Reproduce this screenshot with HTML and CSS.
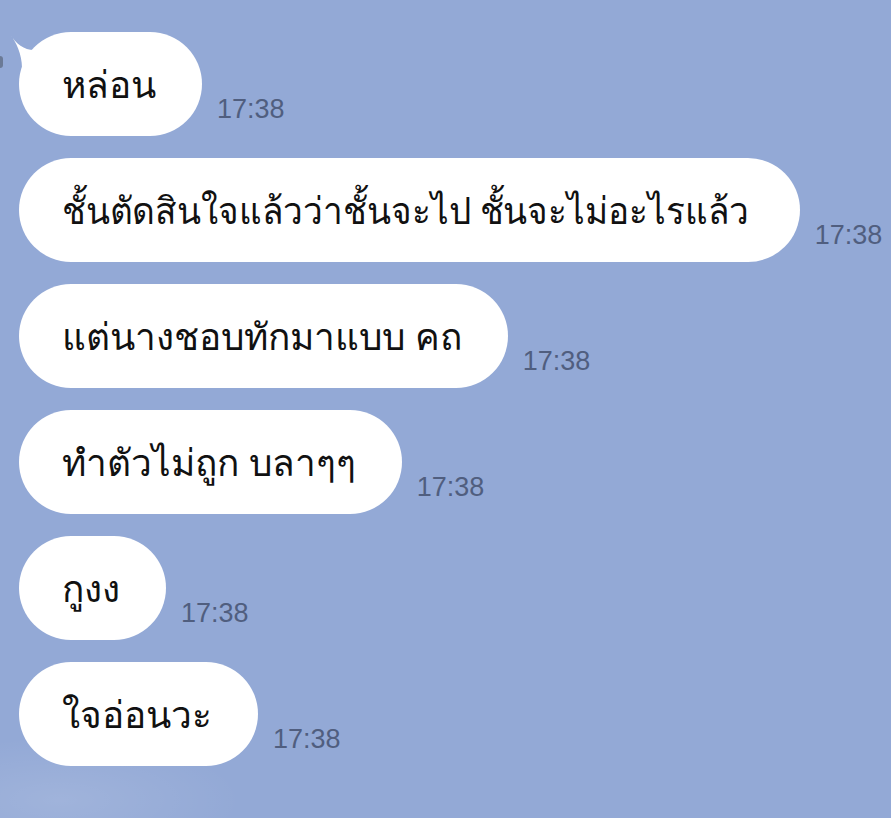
FILE: index.html
```html
<!DOCTYPE html>
<html lang="th">
<head>
    <meta charset="UTF-8">
    <meta name="viewport" content="width=device-width, initial-scale=1.0">
    <title>Chat</title>
    <link rel="stylesheet" href="styles.css">
</head>
<body>
    <div class="avatar-edge"></div>
    <div class="chat">
        <div class="row">
            <div class="bubble first">หล่อน</div>
            <span class="time">17:38</span>
        </div>
        <div class="row">
            <div class="bubble long"><span class="squeeze">ชั้นตัดสินใจแล้วว่าชั้นจะไป ชั้นจะไม่อะไรแล้ว</span></div>
            <span class="time">17:38</span>
        </div>
        <div class="row">
            <div class="bubble">แต่นางชอบทักมาแบบ คถ</div>
            <span class="time">17:38</span>
        </div>
        <div class="row">
            <div class="bubble">ทำตัวไม่ถูก บลาๆๆ</div>
            <span class="time">17:38</span>
        </div>
        <div class="row">
            <div class="bubble">กูงง</div>
            <span class="time">17:38</span>
        </div>
        <div class="row">
            <div class="bubble">ใจอ่อนวะ</div>
            <span class="time">17:38</span>
        </div>
    </div>
</body>
</html>
```

FILE: styles.css
```css
html, body {
    margin: 0;
    height: 100%;
}
body {
    background:
        radial-gradient(ellipse 260px 90px at 60px 800px, rgba(255,255,255,0.12), rgba(255,255,255,0) 70%),
        #93a9d6;
    font-family: "Noto Sans", "Liberation Sans", sans-serif;
    overflow: hidden;
}
.avatar-edge {
    position: absolute;
    left: -3px;
    top: 56px;
    width: 6px;
    height: 12px;
    border-radius: 3px;
    background: #6b7a96;
}
.chat {
    display: flex;
    flex-direction: column;
    gap: 22px;
    padding: 32px 0 0 19px;
}
.row {
    display: flex;
    align-items: flex-end;
    gap: 15px;
}
.bubble {
    position: relative;
    background: #fff;
    color: #111;
    height: 104px;
    line-height: 104px;
    padding: 0 46px 0 43px;
    border-radius: 52px;
    font-size: 37px;
    white-space: nowrap;
    box-sizing: border-box;
}
.bubble.long {
    padding-right: 50px;
}
.squeeze {
    display: inline-block;
    transform: scaleX(0.95);
    transform-origin: left center;
    margin-right: -36px;
}
.bubble.first::before {
    content: "";
    position: absolute;
    left: -9px;
    top: 2px;
    width: 40px;
    height: 34px;
    background: #fff;
    clip-path: path("M0 0 C6 10 14 16 24 16 C30 16 36 12 40 10 L40 34 L12 34 C12 20 6 8 0 0 Z");
}
.time {
    color: #505e7f;
    font-family: "Liberation Sans", Arial, sans-serif;
    font-size: 27px;
    line-height: 1;
    padding-bottom: 13px;
}
```
